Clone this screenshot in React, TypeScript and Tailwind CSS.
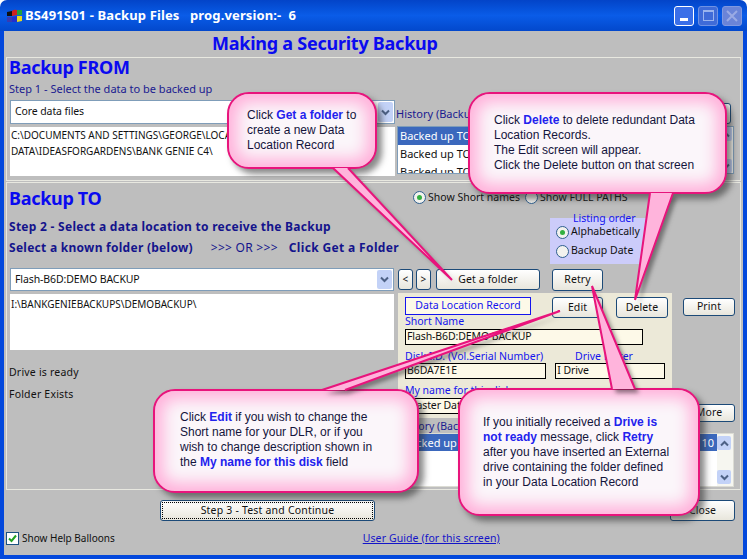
import React from 'react'

const Btn = ({ label, className = '' }: { label: string; className?: string }) => (
  <div
    className={`flex items-center justify-center rounded-[3px] border border-[#1c4a78] bg-gradient-to-b from-white to-[#e8e6dc] text-[10.5px] tracking-[0.1px] text-[#111] ${className}`}
  >
    {label}
  </div>
)

const ComboArrow = () => (
  <div className="my-[1px] mr-[1px] flex w-[15px] items-center justify-center rounded-[2px] bg-[#c3d2f7]">
    <svg width="9" height="7" viewBox="0 0 9 7">
      <path d="M1 1.5 L4.5 5 L8 1.5" fill="none" stroke="#4d6185" strokeWidth="2" />
    </svg>
  </div>
)

const Combo = ({ text, className = '' }: { text: string; className?: string }) => (
  <div className={`flex items-stretch border border-[#7f9db9] bg-white ${className}`}>
    <div className="flex-1 self-center pl-[4px] text-[10.5px] tracking-[-0.1px] text-[#111]">{text}</div>
    <ComboArrow />
  </div>
)

const Radio = ({ on = false }: { on?: boolean }) => (
  <span className="flex h-[13px] w-[13px] shrink-0 items-center justify-center rounded-full border border-[#2f5f8f] bg-[#f2f2ee]">
    {on && <span className="h-[5px] w-[5px] rounded-full bg-[#33b040]" />}
  </span>
)

const ScrollBtn = ({ up = false }: { up?: boolean }) => (
  <div className="flex h-[14px] w-[14px] items-center justify-center rounded-[2px] bg-[#c3d2f7]">
    <svg width="9" height="7" viewBox="0 0 9 7">
      <path d={up ? 'M1 5.5 L4.5 2 L8 5.5' : 'M1 1.5 L4.5 5 L8 1.5'} fill="none" stroke="#4d6185" strokeWidth="2" />
    </svg>
  </div>
)

const Field = ({ text, className = '' }: { text: string; className?: string }) => (
  <div className={`flex h-[16px] items-center border border-black bg-[#fdf9e8] pl-[1px] text-[10.5px] tracking-[-0.1px] text-[#111] ${className}`}>
    {text}
  </div>
)

const Blue = ({ children }: { children: React.ReactNode }) => <b className="text-[#2222ee]">{children}</b>

const Balloon = ({ className, children }: { className: string; children: React.ReactNode }) => (
  <div
    className={`absolute rounded-[22px] border-2 border-[#e8147c] bg-[#fbf6fa] font-['Liberation_Sans',sans-serif] text-[12px] leading-[15px] text-[#14143c] shadow-[inset_0_0_16px_8px_#ffb0da,5px_5px_6px_rgba(40,40,40,0.55)] ${className}`}
  >
    {children}
  </div>
)

// pointer of a balloon: base sits on the balloon edge, tip at the control it refers to
const Tail = ({ a, b, tip }: { a: [number, number]; b: [number, number]; tip: [number, number] }) => (
  <g>
    <polygon
      points={`${a[0]},${a[1]} ${tip[0]},${tip[1]} ${b[0]},${b[1]}`}
      fill="#ffb4dc"
      style={{ filter: 'drop-shadow(4px 4px 2px rgba(40,40,40,0.5))' }}
    />
    <polyline
      points={`${a[0]},${a[1]} ${tip[0]},${tip[1]} ${b[0]},${b[1]}`}
      fill="none"
      stroke="#e8147c"
      strokeWidth="2"
    />
  </g>
)

export default function App() {
  return (
    <div className="relative flex h-[559px] w-[747px] flex-col overflow-hidden bg-white font-['Noto_Sans',sans-serif]">
      {/* title bar */}
      <div className="flex h-[31px] shrink-0 items-center rounded-t-[7px] bg-gradient-to-b from-[#0344c8] via-[#0a5ce8] to-[#0348cc] pl-[7px] pr-[5px]">
        <svg width="16" height="16" viewBox="0 0 16 16" className="mr-[2px]">
          <path d="M0 4 L5 3 L5 8 L0 8Z" fill="#111" />
          <path d="M0 9 L5 9 L5 14 L0 14Z" fill="#3a3ab0" />
          <path d="M5 3 Q7 1 10 2 L10 7 L5 8Z" fill="#d02020" />
          <path d="M10 2 L15 2 L15 7 L10 7Z" fill="#20a040" />
          <path d="M5 9 L10 8 L10 14 L5 14Z" fill="#2030d0" />
          <path d="M10 8 L15 8 L15 13 L10 14Z" fill="#e8d820" />
        </svg>
        <div className="flex-1 whitespace-pre text-[13px] font-bold tracking-[0.13px] text-white">
          BS491S01 - Backup Files   prog.version:-  6
        </div>
        <div className="flex gap-[4px]">
          <div className="flex h-[20px] w-[20px] items-end justify-center rounded-[3px] border border-white bg-[#3a6fe8] pb-[4px]">
            <div className="h-[3px] w-[8px] bg-white" />
          </div>
          <div className="flex h-[20px] w-[20px] items-center justify-center rounded-[3px] border border-[#6f92e4] bg-[#3f6bd8]">
            <div className="h-[11px] w-[11px] border border-t-2 border-[#9ab4ee]" />
          </div>
          <div className="flex h-[20px] w-[20px] items-center justify-center rounded-[3px] border border-[#7f98e0] bg-[#6a84d8]">
            <svg width="12" height="12" viewBox="0 0 12 12">
              <path d="M1 1 L11 11 M11 1 L1 11" stroke="#9aaae4" strokeWidth="2" />
            </svg>
          </div>
        </div>
      </div>

      {/* window body */}
      <div className="flex min-h-0 flex-1 flex-col border-x-[4px] border-b-[4px] border-[#0348dc] bg-[#bebebe] px-[2px]">
        <div className="h-[26px] shrink-0 pl-[206px] text-[18px] font-bold leading-[25px] tracking-[-0.25px] text-[#0a0af0]">
          Making a Security Backup
        </div>

        {/* Backup FROM */}
        <div className="h-[124px] shrink-0 border border-[#e8e8e0] pl-[2px]">
          <div className="text-[18px] font-bold leading-[18px] tracking-[-0.3px] text-[#0a0af0]">Backup FROM</div>
          <div className="mt-[5px] text-[11px] leading-[16px] text-[#1a1a90]">
            Step 1 - Select the data to be backed up
          </div>
          <div className="mt-[3px] flex">
            <div className="w-[386px] shrink-0 pl-[1px]">
              <Combo text="Core data files" className="h-[24px]" />
              <div className="mt-[3px] h-[49px] overflow-hidden bg-white pl-[1px] text-[10px] leading-[16px] text-[#111]">
                <div className="whitespace-nowrap">C:\DOCUMENTS AND SETTINGS\GEORGE\LOCAL SETTINGS\APPLICATION</div>
                <div>DATA\IDEASFORGARDENS\BANK GENIE C4\</div>
              </div>
            </div>
            <div className="ml-[1px] min-w-0 flex-1">
              <div className="flex h-[26px] items-center justify-between pr-[9px]">
                <span className="pt-[3px] text-[11px] text-[#1a1a90]">History (Backups)</span>
                <Btn label="" className="h-[21px] w-[40px]" />
              </div>
              <div className="ml-[1px] mr-[6px] flex h-[48px] overflow-hidden border border-[#7f9db9] bg-white text-[11px] leading-[18px] text-[#111]">
                <div className="flex-1">
                  <div className="bg-[#3b68bd] pl-[2px] text-white">Backed up TO</div>
                  <div className="pl-[2px]">Backed up TO</div>
                  <div className="pl-[2px]">Backed up TO</div>
                </div>
                <div className="flex w-[15px] flex-col justify-between bg-[#f6f6f0]">
                  <ScrollBtn up />
                  <ScrollBtn />
                </div>
              </div>
            </div>
          </div>
        </div>

        {/* Backup TO */}
        <div className="mt-[1px] flex h-[308px] shrink-0 border border-[#e8e8e0] pl-[2px]">
          <div className="w-[387px] shrink-0">
            <div className="mt-[2px] text-[18px] font-bold leading-[26px] tracking-[-0.3px] text-[#0a0af0]">Backup TO</div>
            <div className="mt-[7px] whitespace-nowrap text-[12px] font-bold leading-[18px] tracking-[0.27px] text-[#14148c]">
              Step 2 - Select a data location to receive the Backup
            </div>
            <div className="mt-[3px] flex whitespace-nowrap text-[12px] font-bold leading-[18px] tracking-[0.27px] text-[#14148c]">
              <span>Select a known folder (below)</span>
              <span className="ml-[18px] font-normal">{'>>> OR >>>'}</span>
              <span className="ml-[11px] tracking-[0.35px]">Click Get a Folder</span>
            </div>
            <Combo text="Flash-B6D:DEMO BACKUP" className="ml-[1px] mr-[2px] mt-[11px] h-[23px]" />
            <div className="ml-[1px] mr-[2px] mt-[3px] h-[56px] bg-white pl-[1px] pt-[2px] text-[10px] leading-[16px] text-[#111]">
              I:\BANKGENIEBACKUPS\DEMOBACKUP\
            </div>
            <div className="mt-[14px] text-[10.5px] leading-[16px] tracking-[0.2px] text-[#111]">Drive is ready</div>
            <div className="mt-[6px] text-[10.5px] leading-[16px] tracking-[0.2px] text-[#111]">Folder Exists</div>
          </div>

          <div className="ml-[2px] min-w-0 flex-1">
            <div className="flex h-[29px] items-center pl-[15px] text-[10.5px] text-[#111]">
              <Radio on />
              <span className="ml-[2px]">Show Short names</span>
              <span className="ml-[5px]">
                <Radio />
              </span>
              <span className="ml-[2px]">Show FULL PATHS</span>
            </div>
            <div className="ml-[152px] mt-[6px] flex h-[46px] w-[96px] flex-col bg-[#ccccfa] text-[10.5px] text-[#111]">
              <div className="-mt-[6px] pl-[23px] leading-[13px] text-[#1414ee]">Listing order</div>
              <div className="-mt-[1px] flex h-[16px] items-center pl-[6px]">
                <Radio on />
                <span className="ml-[2px]">Alphabetically</span>
              </div>
              <div className="mt-[3px] flex h-[16px] items-center pl-[6px]">
                <Radio />
                <span className="ml-[2px]">Backup Date</span>
              </div>
            </div>
            <div className="mt-[5px] flex h-[22px]">
              <Btn label="<" className="h-[21px] w-[15px] !text-[10px]" />
              <Btn label=">" className="ml-[3px] h-[21px] w-[15px] !text-[10px]" />
              <Btn label="Get a folder" className="ml-[5px] h-[21px] w-[104px]" />
              <Btn label="Retry" className="ml-[12px] h-[22px] w-[51px]" />
            </div>
            <div className="mt-[2px] flex h-[125px]">
              <div className="h-[125px] w-[274px] shrink-0 bg-[#ece9d8] px-[7px] pt-[4px]">
                <div className="flex h-[18px]">
                  <div className="flex h-[18px] w-[126px] shrink-0 items-center justify-center border border-[#1414ee] bg-[#fdf9e8] text-[10.5px] text-[#1414ee]">
                    Data Location Record
                  </div>
                  <Btn label="Edit" className="ml-[21px] h-[21px] w-[51px] shrink-0" />
                  <Btn label="Delete" className="ml-[13px] h-[21px] w-[52px] shrink-0" />
                </div>
                <div className="text-[10.5px] leading-[13px] text-[#1414ee]">Short Name</div>
                <Field text="Flash-B6D:DEMO BACKUP" className="mt-[1px] w-[238px]" />
                <div className="mt-[4px] flex text-[10.5px] leading-[14px] text-[#1414ee]">
                  <span className="w-[170px]">Disk I.D. (Vol.Serial Number)</span>
                  <span>Drive Letter</span>
                </div>
                <div className="flex">
                  <Field text="B6DA7E1E" className="w-[143px]" />
                  <Field text="I Drive" className="ml-[9px] w-[111px]" />
                </div>
                <div className="mt-[4px] text-[10.5px] leading-[14px] text-[#1414ee]">My name for this disk</div>
                <Field text="Master Data" className="mt-[1px] w-[238px]" />
              </div>
              <div className="flex min-w-0 flex-1 flex-col pl-[11px]">
                <Btn label="Print" className="mt-[5px] h-[21px] w-[52px]" />
                <Btn label="More" className="mt-[88px] h-[22px] w-[52px]" />
              </div>
            </div>
            <div className="mt-[1px] pl-[1px] text-[10.5px] leading-[14px] text-[#1a1a90]">History (Backups)</div>
            <div className="ml-[1px] mr-[6px] flex h-[54px] border border-[#dcdcd4] bg-white text-[11px] leading-[17px]">
              <div className="flex-1">
                <div className="flex justify-between bg-[#3b68bd] px-[3px] text-white">
                  <span>Backed up TO</span>
                  <span>10</span>
                </div>
              </div>
              <div className="flex w-[16px] flex-col justify-between bg-[#f6f6f0] py-[2px]">
                <ScrollBtn up />
                <ScrollBtn />
              </div>
            </div>
          </div>
        </div>

        {/* bottom buttons */}
        <div className="mt-[10px] flex h-[22px] shrink-0 pl-[154px]">
          <div className="flex h-[21px] w-[215px] items-center justify-center rounded-[3px] border border-[#1c4a78] bg-gradient-to-b from-white to-[#e8e6dc] p-[1px] text-[10.5px] tracking-[0.2px] text-[#111]">
            <div className="flex h-full w-full items-center justify-center border border-dotted border-black">
              Step 3 - Test and Continue
            </div>
          </div>
          <Btn label="Close" className="ml-[295px] h-[21px] w-[65px]" />
        </div>
        <div className="mt-[9px] flex items-center text-[10px] text-[#111]">
          <div className="flex h-[13px] w-[13px] items-center justify-center border border-[#1c5180] bg-white">
            <svg width="11" height="11" viewBox="0 0 11 11">
              <path d="M2 5.5 L4.5 8 L9 2.5" fill="none" stroke="#21a121" strokeWidth="2" />
            </svg>
          </div>
          <span className="ml-[3px]">Show Help Balloons</span>
          <span className="ml-[248px] text-[10.5px] tracking-[0.1px] text-[#1414c8] underline">User Guide (for this screen)</span>
        </div>
      </div>

      {/* help balloons lie over the form */}
      <Balloon className="left-[227px] top-[92px] h-[77px] w-[150px] pl-[18px] pt-[14px]">
        Click <Blue>Get a folder</Blue> to
        <br />
        create a new Data
        <br />
        Location Record
      </Balloon>
      <Balloon className="left-[468px] top-[92px] h-[102px] w-[259px] pl-[24px] pt-[19px]">
        Click <Blue>Delete</Blue> to delete redundant Data
        <br />
        Location Records.
        <br />
        The Edit screen will appear.
        <br />
        Click the Delete button on that screen
      </Balloon>
      <Balloon className="left-[153px] top-[389px] h-[104px] w-[266px] pl-[25px] pt-[19px]">
        Click <Blue>Edit</Blue> if you wish to change the
        <br />
        Short name for your DLR, or if you
        <br />
        wish to change description shown in
        <br />
        the <Blue>My name for this disk</Blue> field
      </Balloon>
      <Balloon className="left-[458px] top-[388px] h-[128px] w-[242px] pl-[23px] pt-[25px]">
        If you initially received a <Blue>Drive is</Blue>
        <br />
        <Blue>not ready</Blue> message, click <Blue>Retry</Blue>
        <br />
        after you have inserted an External
        <br />
        drive containing the folder defined
        <br />
        in your Data Location Record
      </Balloon>
      <svg width="747" height="559" viewBox="0 0 747 559" className="pointer-events-none absolute left-0 top-0">
        <Tail a={[333, 168]} b={[348, 168]} tip={[452, 280]} />
        <Tail a={[650, 193]} b={[673, 193]} tip={[635, 300]} />
        <Tail a={[322, 390]} b={[345, 390]} tip={[560, 311]} />
        <Tail a={[612, 389]} b={[635, 389]} tip={[592, 286]} />
      </svg>
    </div>
  )
}
